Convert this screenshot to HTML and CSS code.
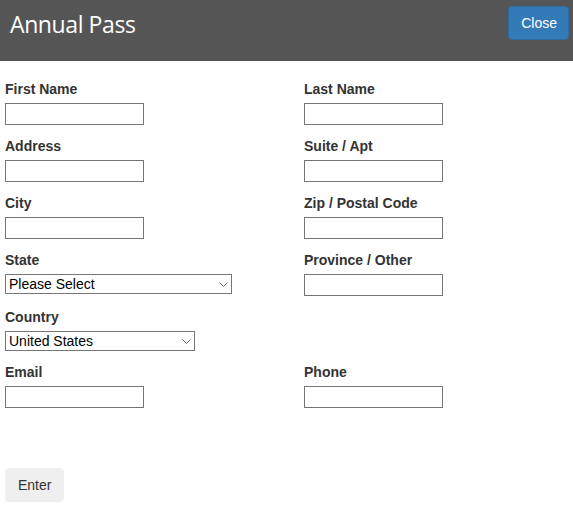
FILE: index.html
```html
<!DOCTYPE html>
<html lang="en">
<head>
<meta charset="utf-8">
<title>Annual Pass</title>
<link rel="stylesheet" href="styles.css">
</head>
<body>
<header class="modal-header">
  <h1 class="modal-title">Annual Pass</h1>
  <button class="btn btn-primary" type="button">Close</button>
</header>
<form class="pass-form">
  <div class="field"><label class="field-label">First Name</label><input class="text-input" type="text"></div>
  <div class="field"><label class="field-label">Last Name</label><input class="text-input" type="text"></div>
  <div class="field"><label class="field-label">Address</label><input class="text-input" type="text"></div>
  <div class="field"><label class="field-label">Suite / Apt</label><input class="text-input" type="text"></div>
  <div class="field"><label class="field-label">City</label><input class="text-input" type="text"></div>
  <div class="field"><label class="field-label">Zip / Postal Code</label><input class="text-input" type="text"></div>
  <div class="field"><label class="field-label">State</label>
    <span class="select-wrap"><select class="select-input state-select"><option>Please Select</option></select><svg class="chevron" width="9" height="5" viewBox="0 0 9 5"><path d="M0.5 0.5 L4.5 4.5 L8.5 0.5" fill="none" stroke="#6a6a6a" stroke-width="1"/></svg></span>
  </div>
  <div class="field"><label class="field-label">Province / Other</label><input class="text-input" type="text"></div>
  <div class="field"><label class="field-label">Country</label>
    <span class="select-wrap"><select class="select-input country-select"><option>United States</option></select><svg class="chevron" width="9" height="5" viewBox="0 0 9 5"><path d="M0.5 0.5 L4.5 4.5 L8.5 0.5" fill="none" stroke="#6a6a6a" stroke-width="1"/></svg></span>
  </div>
  <div class="field"></div>
  <div class="field"><label class="field-label">Email</label><input class="text-input" type="text"></div>
  <div class="field"><label class="field-label">Phone</label><input class="text-input" type="text"></div>
  <div class="actions"><button class="btn btn-default" type="button">Enter</button></div>
</form>
</body>
</html>
```
FILE: styles.css
```css
html, body {
  margin: 0;
  padding: 0;
  background: #ffffff;
  font-family: "Liberation Sans", Arial, sans-serif;
  color: #333333;
}

.modal-header {
  display: flex;
  justify-content: space-between;
  align-items: flex-start;
  height: 61px;
  background: #555555;
}

.modal-title {
  margin: 9px 0 0 10px;
  font-family: "Open Sans", sans-serif;
  font-weight: 400;
  font-size: 23px;
  line-height: 30px;
  letter-spacing: -0.4px;
  color: #ffffff;
}

.btn {
  font-family: "Liberation Sans", Arial, sans-serif;
  font-size: 14px;
  line-height: 20px;
  padding: 6px 12px;
  border-radius: 4px;
  border: 1px solid transparent;
  cursor: pointer;
}

.btn-primary {
  margin: 6px 4px 0 0;
  padding: 6px 11px 6px 12px;
  background: #337ab7;
  border-color: #2e6da4;
  color: #ffffff;
}

.btn-default {
  background: #efefef;
  border-color: #efefef;
  color: #333333;
}

.pass-form {
  display: grid;
  grid-template-columns: 299px 1fr;
  row-gap: 10px;
  padding: 17px 0 0 5px;
}

.field {
  display: flex;
  flex-direction: column;
  align-items: flex-start;
}

.field-label {
  display: block;
  font-weight: 700;
  font-size: 14px;
  line-height: 20px;
  padding-top: 1px;
  margin-bottom: 4px;
}

.text-input {
  box-sizing: border-box;
  width: 139px;
  height: 22px;
  margin: 0;
  border: 1px solid #767676;
  border-radius: 0;
  padding: 1px 3px;
  font-family: "Liberation Sans", Arial, sans-serif;
  font-size: 14px;
}

.select-wrap {
  position: relative;
  display: inline-block;
  line-height: 0;
}

.select-input {
  -webkit-appearance: none;
  appearance: none;
  box-sizing: border-box;
  height: 20px;
  margin: 0;
  border: 1px solid #767676;
  border-radius: 0;
  background: #ffffff;
  color: #000000;
  padding: 1px 0 0 3px;
  font-family: "Liberation Sans", Arial, sans-serif;
  font-size: 14px;
  line-height: 17px;
}

.chevron {
  position: absolute;
  right: 4px;
  top: 8px;
  pointer-events: none;
}

.state-select {
  width: 227px;
}

.country-select {
  width: 190px;
}

.actions {
  grid-column: 1 / -1;
  margin-top: 50px;
}
```
